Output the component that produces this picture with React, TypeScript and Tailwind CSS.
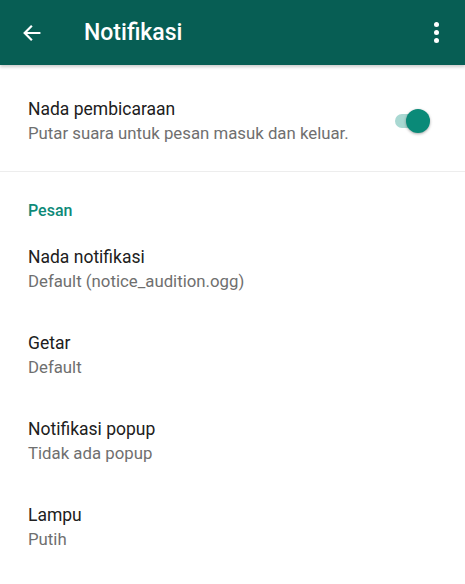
export default function App() {
  const items = [
    { title: "Nada notifikasi", sub: "Default (notice_audition.ogg)" },
    { title: "Getar", sub: "Default" },
    { title: "Notifikasi popup", sub: "Tidak ada popup" },
    { title: "Lampu", sub: "Putih" },
  ];

  return (
    <div className="w-[465px] h-[584px] overflow-hidden bg-white font-['Roboto',sans-serif]">
      {/* App bar */}
      <div className="relative z-10 flex h-[65px] items-center bg-[#075e54] shadow-[0_2px_3px_rgba(0,0,0,0.2)]">
        <div className="flex w-[84px] justify-center pr-[20px]">
          <svg width="22" height="22" viewBox="0 0 24 24" fill="none" stroke="white" strokeWidth="2.4" strokeLinecap="square">
            <path d="M20 12H5M11 5l-7 7 7 7" />
          </svg>
        </div>
        <div className="flex-1 pt-[1px] text-[23px] font-medium text-white">Notifikasi</div>
        <div className="flex w-[56px] flex-col items-center gap-[3px] pr-[2px]">
          <span className="h-[5px] w-[5px] rounded-full bg-white" />
          <span className="h-[5px] w-[5px] rounded-full bg-white" />
          <span className="h-[5px] w-[5px] rounded-full bg-white" />
        </div>
      </div>

      {/* Nada pembicaraan */}
      <div className="flex items-center border-b border-[#ededed] pl-[28px] pr-[40px] pt-[32px] pb-[26px]">
        <div className="flex-1">
          <div className="text-[17.5px] leading-[24px] text-[#202020]">Nada pembicaraan</div>
          <div className="text-[16.8px] leading-[24px] text-[#6f6f6f]">Putar suara untuk pesan masuk dan keluar.</div>
        </div>
        <div className="relative h-[14px] w-[30px] rounded-full bg-[#a9d8d2]">
          <span className="absolute -right-[5px] -top-[5px] h-[24px] w-[24px] rounded-full bg-[#0a8a78] shadow-[0_1px_3px_rgba(0,0,0,0.35)]" />
        </div>
      </div>

      {/* Pesan */}
      <div className="mb-[5px] pl-[28px] pt-[29px] text-[16px] font-medium leading-[20px] text-[#0e8a78]">Pesan</div>
      {items.map((it) => (
        <div key={it.title} className="py-[19px] pl-[28px]">
          <div className="text-[17.5px] leading-[24px] text-[#202020]">{it.title}</div>
          <div className="text-[16.8px] leading-[24px] text-[#6f6f6f]">{it.sub}</div>
        </div>
      ))}
    </div>
  );
}
